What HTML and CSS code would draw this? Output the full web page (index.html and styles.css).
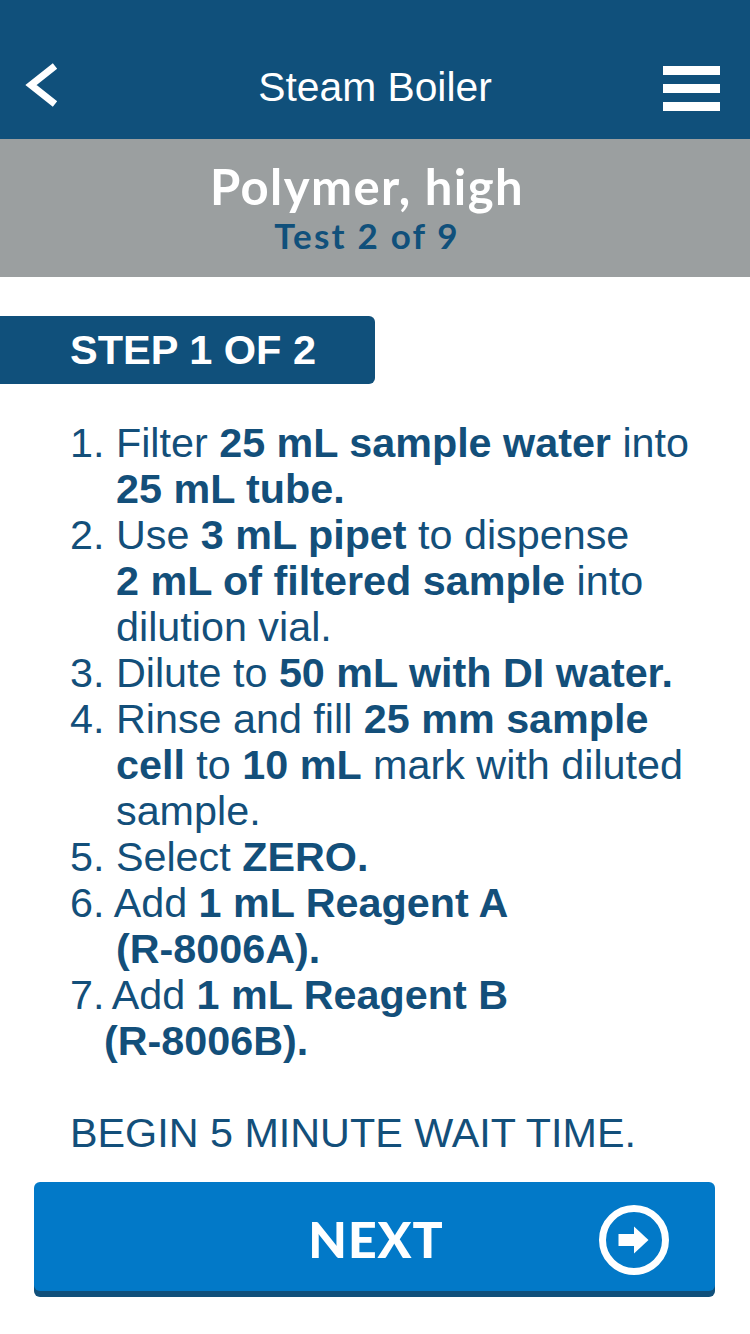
FILE: index.html
```html
<!DOCTYPE html>
<html lang="en">
<head>
<meta charset="utf-8">
<title>Steam Boiler</title>
<link rel="stylesheet" href="styles.css">
</head>
<body>
<div class="app">
  <header class="topbar">
    <div class="back">
      <svg width="48" height="60" viewBox="0 0 48 60"><polyline points="35,10 11,29 35,48" fill="none" stroke="#fff" stroke-width="7" stroke-miterlimit="10"/></svg>
    </div>
    <h1 class="title">Steam Boiler</h1>
    <div class="menu">
      <span class="bar"></span><span class="bar"></span><span class="bar"></span>
    </div>
  </header>
  <section class="testband">
    <div class="testname">Polymer, high</div>
    <div class="testcount">Test 2 of 9</div>
  </section>
  <main class="content">
    <div class="stepbadge">STEP 1 OF 2</div>
    <ol class="steps">
      <li class="step">1. Filter <b>25 mL sample water</b> into<br><b>25 mL tube.</b></li>
      <li class="step">2. Use <b>3 mL pipet</b> to dispense<br><b>2 mL of filtered sample</b> into<br>dilution vial.</li>
      <li class="step">3. Dilute to <b>50 mL with DI water.</b></li>
      <li class="step">4. Rinse and fill <b>25 mm sample</b><br><b>cell</b> to <b>10 mL</b> mark with diluted<br>sample.</li>
      <li class="step">5. Select <b>ZERO.</b></li>
      <li class="step">6. Add <b>1 mL Reagent A</b><br><b>(R-8006A).</b></li>
      <li class="step step-narrow"><span class="num-tight">7.</span> Add <b>1 mL Reagent B</b><br><b>(R-8006B).</b></li>
    </ol>
    <p class="wait">BEGIN 5 MINUTE WAIT TIME.</p>
    <div class="nextbtn">
      <span class="nextlabel">NEXT</span>
      <svg class="nexticon" width="76" height="76" viewBox="0 0 76 76">
        <circle cx="38" cy="38" r="31.5" fill="none" stroke="#fff" stroke-width="7"/>
        <rect x="22.5" y="32" width="16.5" height="12" fill="#fff"/>
        <polygon points="38,24.5 52.5,38 38,51.5" fill="#fff"/>
      </svg>
    </div>
  </main>
</div>
</body>
</html>
```
FILE: styles.css
```css
* { box-sizing: border-box; }
html, body { margin: 0; padding: 0; background: #fff; }
body { width: 750px; height: 1334px; overflow: hidden; font-family: "Liberation Sans", Arial, sans-serif; }
.app { display: flex; flex-direction: column; }

.topbar {
  height: 139px;
  background: #10507b;
  display: grid;
  grid-template-columns: 1fr auto 1fr;
  align-items: start;
}
.back { padding: 56px 0 0 20px; }
.back svg { display: block; }
.title {
  margin: 0;
  padding-top: 64px;
  font-family: "Liberation Sans", Arial, sans-serif;
  font-weight: normal;
  font-size: 40.8px;
  line-height: 46px;
  color: #fff;
  text-align: center;
}
.menu {
  justify-self: end;
  margin: 66px 30px 0 0;
  display: flex;
  flex-direction: column;
  gap: 9px;
}
.bar { display: block; width: 57px; height: 9px; background: #fff; }

.testband {
  height: 138px;
  background: #9b9fa0;
  display: flex;
  flex-direction: column;
  align-items: center;
  padding: 21px 16px 0 0;
  font-family: Lato, "Open Sans", sans-serif;
  font-weight: 700;
}
.testname { color: #fff; font-size: 49px; line-height: 52px; letter-spacing: 1.4px; }
.testcount { color: #10507b; font-size: 35px; line-height: 40px; margin-top: 3px; letter-spacing: 2.2px; }

.content { display: flex; flex-direction: column; padding-top: 39px; }
.stepbadge {
  width: 375px;
  height: 68px;
  background: #10507b;
  border-radius: 0 6px 6px 0;
  color: #fff;
  font-weight: 700;
  font-size: 41.5px;
  line-height: 68px;
  padding-left: 70px;
  white-space: nowrap;
}
.steps {
  list-style: none;
  margin: 36px 0 0;
  padding: 0 0 0 70px;
  color: #134f7a;
  font-size: 41.3px;
  line-height: 46px;
}
.step { padding-left: 46px; text-indent: -46px; white-space: nowrap; }
.step-narrow { padding-left: 34px; text-indent: -34px; }
.num-tight { margin-right: -2px; }
.steps b { font-weight: 700; }

.wait {
  margin: 46px 0 0;
  padding-left: 70px;
  color: #134f7a;
  font-size: 41.3px;
  line-height: 46px;
  white-space: nowrap;
}

.nextbtn {
  position: relative;
  margin: 26px 35px 0 34px;
  height: 109px;
  background: #0279c8;
  border-radius: 6px;
  box-shadow: 0 6px 0 #10507b;
  display: flex;
  align-items: center;
  justify-content: center;
}
.nextlabel {
  color: #fff;
  font-family: Lato, "Open Sans", sans-serif;
  font-weight: 900;
  font-size: 50px;
  letter-spacing: 1px;
  padding: 4px 0 0 3px;
}
.nexticon { position: absolute; right: 43px; top: 20px; }
```
